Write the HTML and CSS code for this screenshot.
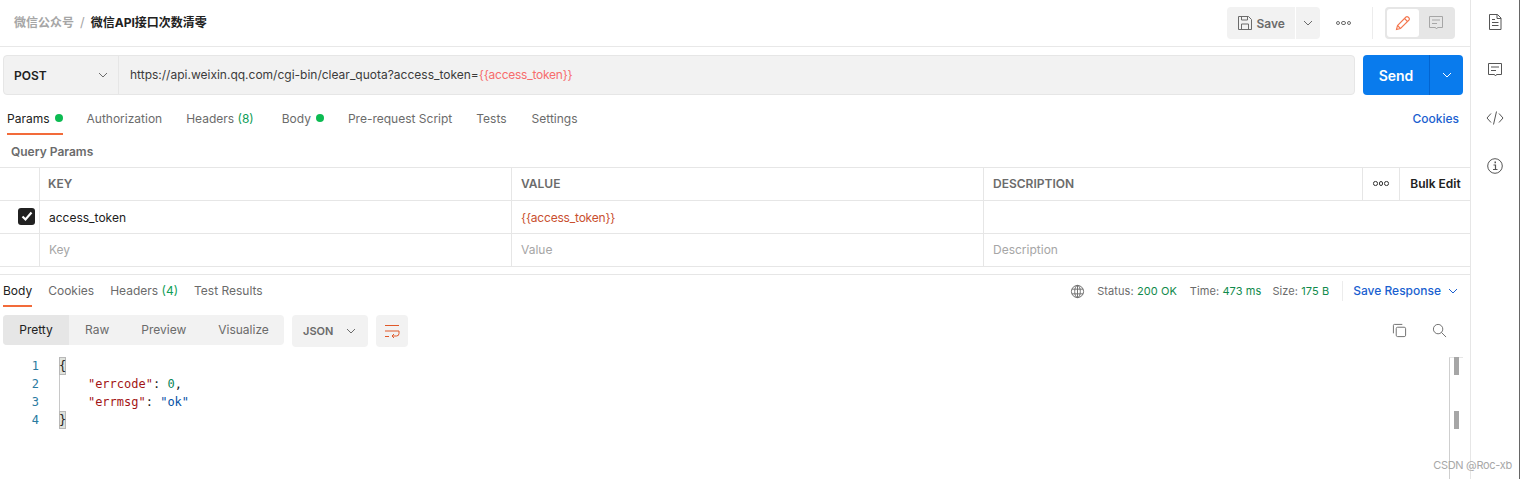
FILE: index.html
```html
<!DOCTYPE html>
<html lang="zh">
<head>
<meta charset="utf-8">
<title>微信API接口次数清零</title>
<link rel="stylesheet" href="styles.css">
</head>
<body>
<div class="app">
  <main class="main">
    <header class="head">
      <div class="crumbs"><span class="crumb-parent">微信公众号</span><span class="crumb-sep">/</span><span class="crumb-name">微信API接口次数清零</span></div>
      <div class="head-actions">
        <button class="save">
          <svg class="ico-save" viewBox="0 0 16 16" fill="none" stroke="#6b6b6b"><path d="M1.500 1.500h10l3 3v10h-13z"/><path d="M4.500 1.500v3.500h6v-3.500M4.500 14.500v-5.500h7v5.500"/></svg>
          <span>Save</span>
        </button>
        <button class="save-more"><svg class="chev" viewBox="0 0 12 12" fill="none" stroke="#6b6b6b"><path d="M2 4l4 4 4-4"/></svg></button>
        <span class="dots"><i></i><i></i><i></i></span>
        <span class="vdiv"></span>
        <div class="toggle">
          <span class="toggle-on"><svg viewBox="0 0 16 16" width="16" height="16" fill="none" stroke="#f4774f" stroke-width="1.100"><path d="M1.500 14.500l1-4L11 2a1.400 1.400 0 0 1 2 0l1 1a1.400 1.400 0 0 1 0 2l-8.500 8.500z"/><path d="M9.500 3.500l3 3M2.500 10.500l3 3"/></svg></span>
          <span class="toggle-off"><svg viewBox="0 0 16 16" width="16" height="16" fill="none" stroke="#a6a6a6"><path d="M1.500 1.500h13v11h-5l-1 1.500-1-1.500h-6z"/><path d="M4 5h8M4 8.500h5"/></svg></span>
        </div>
      </div>
    </header>

    <div class="url-row">
      <div class="url-box">
        <div class="method"><span>POST</span><svg class="chev" viewBox="0 0 12 12" fill="none" stroke="#6b6b6b"><path d="M2 4l4 4 4-4"/></svg></div>
        <div class="url">https://api.weixin.qq.com/cgi-bin/clear_quota?access_token=<span class="var">{{access_token}}</span></div>
      </div>
      <div class="send"><span class="send-label">Send</span><span class="send-more"><svg class="chev" viewBox="0 0 12 12" fill="none" stroke="#fff"><path d="M2 4l4 4 4-4"/></svg></span></div>
    </div>

    <nav class="req-tabs">
      <span class="tab active">Params<i class="dot"></i></span>
      <span class="tab">Authorization</span>
      <span class="tab">Headers <em>(8)</em></span>
      <span class="tab body-tab">Body<i class="dot"></i></span>
      <span class="tab">Pre-request Script</span>
      <span class="tab">Tests</span>
      <span class="tab settings-tab">Settings</span>
      <span class="cookies">Cookies</span>
    </nav>

    <div class="qp">Query Params</div>

    <div class="table">
      <div class="cell"></div><div class="cell th">KEY</div><div class="cell th">VALUE</div><div class="cell th">DESCRIPTION</div><div class="cell th center"><span class="dots dark"><i></i><i></i><i></i></span></div><div class="cell th center bulk">Bulk Edit</div>
      <div class="cell check-cell"><span class="check"><svg viewBox="0 0 16 16" width="16" height="16" fill="none" stroke="#fff" stroke-width="2.200"><path d="M3.500 8.500l3 3 6-7"/></svg></span></div><div class="cell key">access_token</div><div class="cell val">{{access_token}}</div><div class="cell wide"></div>
      <div class="cell"></div><div class="cell ph">Key</div><div class="cell ph">Value</div><div class="cell ph wide">Description</div>
    </div>

    <section class="resp">
      <div class="resp-head">
        <nav class="resp-tabs">
          <span class="rtab active">Body</span>
          <span class="rtab">Cookies</span>
          <span class="rtab">Headers <em>(4)</em></span>
          <span class="rtab">Test Results</span>
        </nav>
        <div class="resp-meta">
          <svg class="globe" viewBox="0 0 16 16" fill="none" stroke="#6b6b6b"><circle cx="8" cy="8" r="6.500"/><ellipse cx="8" cy="8" rx="3" ry="6.500"/><path d="M2 5.500h12M2 10.500h12M8 1.500v13"/></svg>
          <span class="stat stat-status">Status: <b>200 OK</b></span>
          <span class="stat stat-time">Time: <b>473 ms</b></span>
          <span class="stat">Size: <b>175 B</b></span>
          <span class="vdiv short"></span>
          <span class="save-resp">Save Response</span>
          <svg class="chev blue" viewBox="0 0 12 12" fill="none" stroke="#1a5fd0"><path d="M2 4l4 4 4-4"/></svg>
        </div>
      </div>

      <div class="view-row">
        <div class="seg"><span class="seg-item on">Pretty</span><span class="seg-item raw">Raw</span><span class="seg-item prev">Preview</span><span class="seg-item vis">Visualize</span></div>
        <div class="json"><span>JSON</span><svg class="chev" viewBox="0 0 12 12" fill="none" stroke="#6b6b6b"><path d="M2 4l4 4 4-4"/></svg></div>
        <div class="wrap-btn"><svg viewBox="0 0 16 16" width="16" height="16" fill="none" stroke="#e0592a"><path d="M1 2.500h14M1 8h14M1 13.500h4M15 8v2.500a2.500 2.500 0 0 1-2.500 2.500H8M10 11l-2 2 2 2"/></svg></div>
        <div class="view-tools">
          <svg viewBox="0 0 16 16" width="15" height="15" fill="none" stroke="#6b6b6b"><path d="M1.500 11V2.500a1 1 0 0 1 1-1H11"/><rect x="4.500" y="4.500" width="10" height="10" rx="1.500"/></svg>
          <svg viewBox="0 0 16 16" width="15" height="15" fill="none" stroke="#6b6b6b"><circle cx="6.500" cy="6.500" r="5"/><path d="M10 10l5 5"/></svg>
        </div>
      </div>

      <div class="editor">
        <div class="gutter"><div>1</div><div>2</div><div>3</div><div>4</div></div>
        <div class="code">
          <div class="line"><span class="brace">{</span></div>
          <div class="line guide">    <span class="k">"errcode"</span>: <span class="n">0</span>,</div>
          <div class="line guide">    <span class="k">"errmsg"</span>: <span class="s">"ok"</span></div>
          <div class="line"><span class="brace">}</span></div>
        </div>
        <div class="minimap"><span class="mark m1"></span><span class="mark m2"></span></div>
      </div>
    </section>
  </main>
  <aside class="side">
    <svg viewBox="0 0 16 18" width="16" height="18" fill="none" stroke="#555"><path d="M2.500 1.500h8l3.500 3.500v11.500h-11.500z"/><path d="M10 1.500v4h4M5 6.500h3M5 9.500h6.500M5 12.500h6.500"/></svg>
    <svg viewBox="0 0 16 16" width="16" height="16" fill="none" stroke="#555"><path d="M1.500 1.500h13v11h-5l-1 1.500-1-1.500h-6z"/><path d="M4 5h8M4 8.500h5"/></svg>
    <svg class="side-nudge" viewBox="0 0 18 16" width="18" height="16" fill="none" stroke="#555"><path d="M5 3.500L1 8l4 4.500M13 3.500l4 4.500-4 4.500M10.500 1.500l-3 13"/></svg>
    <svg class="side-nudge" viewBox="0 0 16 16" width="16" height="16" fill="none" stroke="#555"><circle cx="8" cy="8" r="7.300"/><path d="M6.500 7h2v4.500M6 11.500h4.500" stroke-width="1.200"/><path d="M7.500 4.300h1.500" stroke-width="1.800"/></svg>
  </aside>
</div>
<div class="watermark">CSDN @Roc-xb</div>
</body>
</html>
```

FILE: styles.css
```css
* { box-sizing: border-box; }
html, body { margin: 0; height: 100%; background: #fff; overflow: hidden; }
body { font-family: Inter, "Noto Sans CJK SC", sans-serif; font-size: 12px; color: #6b6b6b; }
button { font: inherit; border: 0; padding: 0; color: inherit; }
em { font-style: normal; color: #0f9d58; }

.app { display: flex; width: 1520px; height: 479px; border-right: 1px solid #666; }
.main { width: 1471px; flex: none; border-right: 1px solid #e6e6e6; }
.side { flex: 1; display: flex; flex-direction: column; align-items: center; padding-top: 13px; gap: 31px; }
.side svg { flex: none; }
.side-nudge { margin-top: 1px; }

.head { height: 47px; border-bottom: 1px solid #e8e8e8; display: flex; align-items: center; justify-content: space-between; padding: 0 15px 0 14px; }
.crumbs { display: flex; align-items: center; font-size: 12px; font-weight: 700; padding-bottom: 3px; }
.crumb-parent { color: #a6a6a6; white-space: nowrap; }
.crumb-sep { color: #a6a6a6; margin: 0 6px; font-weight: 400; font-size: 13px; }
.crumb-name { color: #212121; }
.head-actions { display: flex; align-items: center; height: 32px; }
.save { width: 68px; height: 32px; background: #f2f2f2; border-radius: 4px 0 0 4px; display: flex; align-items: center; gap: 4px; padding-left: 10px; font-size: 12px; font-weight: 600; color: #6b6b6b; }
.ico-save { width: 16px; height: 16px; }
.save-more { width: 24px; height: 32px; margin-left: 1px; background: #f2f2f2; border-radius: 0 4px 4px 0; display: flex; align-items: center; justify-content: center; }
.chev { width: 12px; height: 12px; flex: none; }
.dots { display: inline-flex; gap: 1px; margin-left: 16px; }
.dots i { width: 4.500px; height: 4.500px; border: 1px solid #6b6b6b; border-radius: 50%; }
.dots.dark { margin: 0; }
.dots.dark i { border-color: #333; }
.vdiv { width: 1px; height: 32px; background: #ececec; margin: 0 12px 0 21px; }
.toggle { width: 70px; height: 32px; background: #e6e6e6; border-radius: 4px; padding: 2px; display: flex; }
.toggle-on { width: 32px; height: 28px; background: #fff; border-radius: 3px; display: flex; align-items: center; justify-content: center; }
.toggle-off { width: 34px; display: flex; align-items: center; justify-content: center; }

.url-row { display: flex; gap: 8px; padding: 8px 7px 0 3px; height: 48px; }
.url-box { flex: 1; height: 40px; background: #f2f2f2; border: 1px solid #e6e6e6; border-radius: 4px; display: flex; }
.method { width: 115px; border-right: 1px solid #e6e6e6; display: flex; align-items: center; justify-content: space-between; padding: 0 9px 0 10px; font-weight: 600; color: #212121; }
.url { padding-left: 11px; padding-bottom: 1px; display: flex; align-items: center; color: #3b3b3b; font-size: 12px; white-space: pre; }
.var { color: #f76c6c; letter-spacing: -.24px; }
.send { width: 100px; height: 40px; background: #097bed; border-radius: 4px; display: flex; color: #fff; font-size: 14px; font-weight: 600; }
.send-label { width: 67px; display: flex; align-items: center; justify-content: center; border-right: 1px solid #0265d2; }
.send-more { flex: 1; display: flex; align-items: center; justify-content: center; }

.req-tabs { height: 41px; padding-left: 7px; padding-right: 11px; display: flex; gap: 24px; align-items: flex-start; font-size: 12px; }
.tab { height: 40px; padding-top: 16px; display: flex; align-items: flex-start; white-space: pre; line-height: 15px; border-bottom: 2px solid transparent; }
.tab.active { color: #212121; border-color: #f26b3a; }
.dot { width: 8px; height: 8px; border-radius: 50%; background: #0cbb52; margin: 3px 0 0 5px; }
.body-tab { margin-left: 4px; }
.settings-tab { margin-left: 1px; }
.cookies { margin-left: auto; padding-top: 16px; line-height: 15px; color: #1a5fd0; font-weight: 500; }

.qp { height: 31px; padding: 8px 0 0 11px; line-height: 15px; font-weight: 600; font-size: 12px; }

.table { display: grid; grid-template-columns: 40px 472px 472px 379px 37px 70px; grid-auto-rows: 33px; border-top: 1px solid #e6e6e6; height: 100px; }
.cell { border-right: 1px solid #e6e6e6; border-bottom: 1px solid #e6e6e6; display: flex; align-items: center; padding-left: 9px; white-space: nowrap; }
.cell:nth-child(6), .wide { border-right: 0; }
.wide { grid-column: span 3; }
.th { font-weight: 600; padding-bottom: 2px; }
.cell.th:nth-child(2) { padding-left: 8px; }
.center { justify-content: center; padding: 0 0 1px; }
.bulk { color: #212121; padding-left: 1px; }
.key { color: #212121; }
.val { color: #c9502f; letter-spacing: -.2px; }
.ph { color: #a6a6a6; padding-bottom: 2px; }
.check-cell { padding: 0 0 2px 18px; }
.check { width: 17px; height: 17px; background: #212121; border-radius: 3px; display: flex; align-items: center; justify-content: center; }

.resp { border-top: 1px solid #e6e6e6; margin-top: 7px; }
.resp-head { height: 32px; display: flex; justify-content: space-between; padding: 0 11px 0 3px; }
.resp-tabs { display: flex; gap: 16px; }
.rtab { height: 32px; padding-top: 8px; line-height: 15px; border-bottom: 2px solid transparent; white-space: pre; }
.rtab.active { color: #212121; border-color: #f26b3a; }
.resp-meta { display: flex; align-items: center; font-size: 11px; letter-spacing: .08px; }
.globe { width: 15px; height: 15px; margin-right: 12px; }
.stat { margin-right: 13px; white-space: pre; }
.stat-status { margin-right: 13px; }
.stat-time { margin-right: 11px; }
.stat b { font-weight: 400; color: #0f8a4b; }
.vdiv.short { height: 20px; margin: 0 10px 0 0; }
.save-resp { color: #1a5fd0; font-size: 12px; font-weight: 500; margin-right: 6px; letter-spacing: 0; padding-bottom: 1px; }
.view-row { display: flex; align-items: flex-start; padding: 8px 23px 0 3px; height: 50px; }
.seg { width: 281px; height: 30px; background: #f2f2f2; border-radius: 4px; display: flex; align-items: center; overflow: hidden; }
.seg-item { height: 30px; line-height: 30px; }
.seg-item.on { width: 66px; background: #e6e6e6; color: #212121; text-align: center; }
.raw { margin-left: 16px; }
.prev { margin-left: 32px; }
.vis { margin-left: 32px; }
.json { width: 76px; height: 32px; margin-left: 8px; background: #f2f2f2; border-radius: 4px; display: flex; align-items: center; justify-content: space-between; padding: 0 11px; font-size: 11px; font-weight: 600; }
.wrap-btn { width: 32px; height: 32px; margin-left: 8px; background: #f2f2f2; border-radius: 4px; display: flex; align-items: center; justify-content: center; }
.view-tools { margin-left: auto; display: flex; gap: 25px; padding-top: 8px; }

.editor { position: relative; display: flex; font-family: "DejaVu Sans Mono", monospace; font-size: 12px; line-height: 18px; height: 122px; }
.gutter { width: 59px; padding-right: 20px; text-align: right; color: #2a7a9f; flex: none; }
.code { flex: 1; color: #212121; }
.line { height: 18px; white-space: pre; }
.guide { box-shadow: inset 1px 0 0 #c8c8c8; }
.brace { display: inline-block; width: 7px; height: 18px; background: #dfe2dc; box-shadow: inset 0 0 0 1px #b8b8b8; }
.k { color: #a31515; }
.n { color: #098658; }
.s { color: #0451a5; }
.minimap { position: absolute; top: 0; right: 7px; width: 14px; height: 122px; border-left: 1px solid #cfcfcf; border-top: 1px solid #e6e6e6; }
.mark { position: absolute; left: 4px; width: 5px; height: 18px; background: #a6a6a6; }
.m1 { top: -1px; }
.m2 { top: 53px; }

.watermark { position: absolute; right: 15px; bottom: 7px; font-size: 11px; color: #a8a8a8; letter-spacing: -.3px; }
```
